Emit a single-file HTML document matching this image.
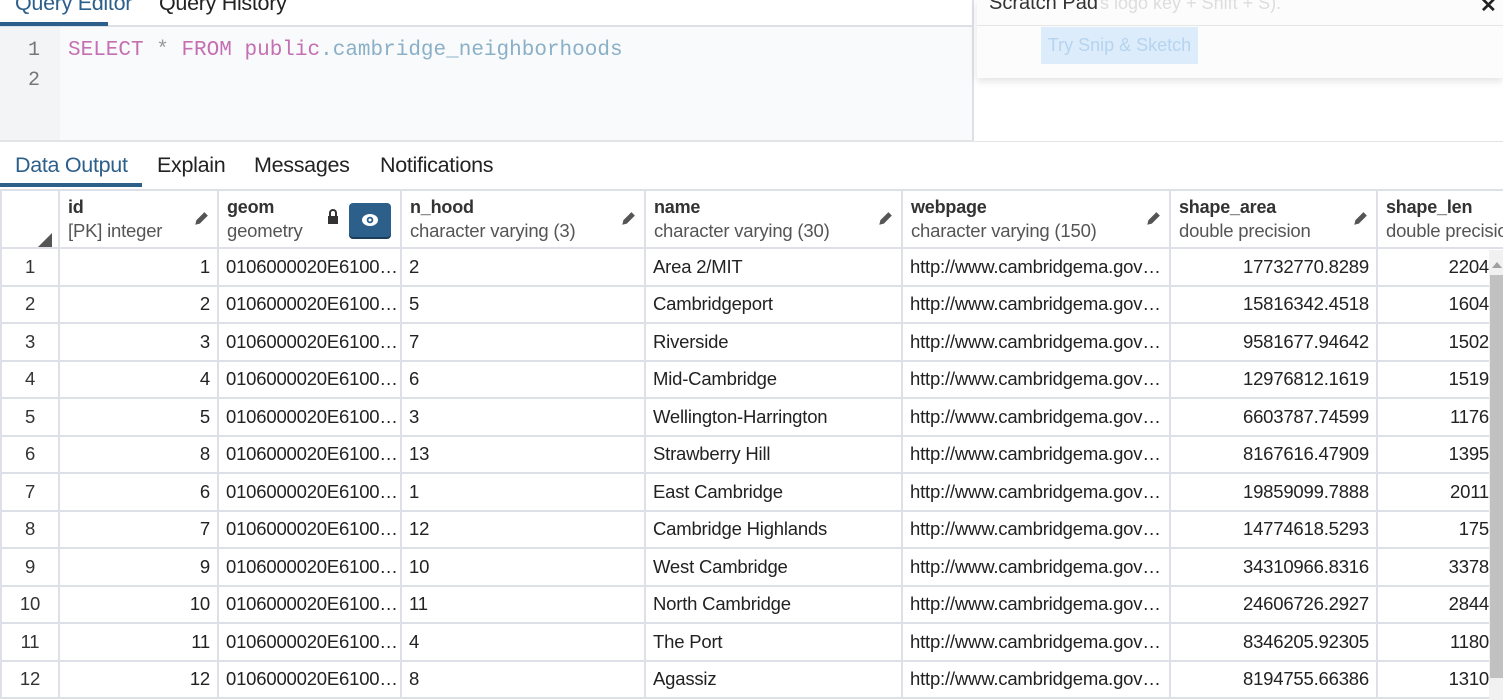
<!DOCTYPE html><html><head><style>
body{margin:0;width:1503px;height:700px;overflow:hidden;background:#fff;font-family:"Liberation Sans",sans-serif;color:#222;position:relative}
.a{position:absolute}
.tab{font-size:21.5px;color:#222;letter-spacing:-0.3px}
table{border-collapse:collapse;table-layout:fixed;position:absolute;left:0;top:189px;width:1510px;font-size:18.5px;letter-spacing:-0.2px}
td,th{border:2px solid #dde0e6;overflow:hidden;white-space:nowrap;padding:0 7px;height:35.5px}
th{height:56px;text-align:left;font-weight:normal;vertical-align:middle;position:relative;padding-left:8px}
th b{font-weight:bold;color:#333;font-size:18px;display:block;line-height:24px}
th span{color:#555;display:block;line-height:24px}
td.r{text-align:right}
td.c{text-align:center;color:#333}
.pen{position:absolute;right:8px;top:20px;width:16px;height:16px}
</style></head><body>
<div class="a" style="left:0;top:25px;width:973px;height:2px;background:#dde0e6"></div>
<div class="a" style="left:0;top:22px;width:108px;height:4px;background:#2c5f8a"></div>
<div class="a tab" style="left:15px;top:-9px;color:#2c5f8a">Query Editor</div>
<div class="a tab" style="left:159px;top:-9px">Query History</div>
<div class="a" style="left:0;top:27px;width:60px;height:113px;background:#f3f4f6"></div>
<div class="a" style="left:60px;top:27px;width:912px;height:113px;background:#f9fafb"></div>
<div class="a" style="left:972px;top:0;width:2px;height:141px;background:#dde0e6"></div>
<div class="a" style="left:0;top:140px;width:1503px;height:2px;background:#e2e4e8"></div>
<div class="a" style="left:28px;top:39px;font-family:'Liberation Mono',monospace;font-size:20px;color:#777">1</div>
<div class="a" style="left:28px;top:69px;font-family:'Liberation Mono',monospace;font-size:20px;color:#777">2</div>
<div class="a" style="left:68px;top:39px;font-family:'Liberation Mono',monospace;font-size:21px;color:#8ab0c8;white-space:pre"><span style="color:#c56fb3">SELECT</span> <span style="color:#999">*</span> <span style="color:#c56fb3">FROM</span> <span style="color:#c56fb3">public</span>.cambridge_neighborhoods</div>
<div class="a" style="left:974px;top:0;width:529px;height:141px;background:#fff"></div>
<div class="a" style="left:977px;top:0;width:526px;height:78px;background:#fcfcfc;box-shadow:0 3px 8px rgba(0,0,0,0.12)"></div>
<div class="a" style="left:977px;top:25px;width:526px;height:1px;background:#e5e5e5"></div>
<div class="a" style="left:989px;top:-8px;font-size:20px;color:#333">Scratch Pad</div>
<div class="a" style="left:1100px;top:-7px;font-size:18px;color:#ddd">s logo key + Shift + S).</div>
<div class="a" style="left:1480px;top:-7px;font-size:20px;font-weight:bold;color:#222">✕</div>
<div class="a" style="left:1041px;top:27px;width:157px;height:37px;background:#dcecfb;color:#b6d4f0;font-size:18px;line-height:37px;text-align:center">Try Snip &amp; Sketch</div>
<div class="a tab" style="left:15px;top:153px;color:#2c5f8a">Data Output</div>
<div class="a tab" style="left:157px;top:153px">Explain</div>
<div class="a tab" style="left:254px;top:153px">Messages</div>
<div class="a tab" style="left:380px;top:153px">Notifications</div>
<div class="a" style="left:0;top:183px;width:142px;height:4px;background:#2c5f8a"></div>
<table>
<colgroup><col style="width:58px"><col style="width:159px"><col style="width:183px"><col style="width:244px"><col style="width:257px"><col style="width:268px"><col style="width:207px"><col style="width:134px"></colgroup>
<tr><th style="position:relative"><div style="position:absolute;left:36px;top:42px;width:0;height:0;border-left:14px solid transparent;border-bottom:14px solid #555"></div></th>
<th><b>id</b><span>[PK] integer</span><svg class="pen" viewBox="0 0 14 14"><path d="M2 12l1-4 7-7 3 3-7 7z" fill="#555"/></svg></th>
<th><b>geom</b><span>geometry</span><svg style="position:absolute;left:108px;top:18px" width="12" height="16" viewBox="0 0 12 16"><path d="M3 7V4a3 3 0 0 1 6 0v3" stroke="#333" stroke-width="2" fill="none"/><rect x="1" y="7" width="10" height="8" fill="#333"/></svg><div style="position:absolute;left:130px;top:12px;width:42px;height:34px;background:#2c5f8a;border-radius:4px;box-shadow:0 2px 0 #1b3d5a"><svg style="position:absolute;left:12px;top:10px" width="18" height="14" viewBox="0 0 18 14"><ellipse cx="9" cy="7" rx="8" ry="6" fill="#fff"/><circle cx="9" cy="7" r="3.3" fill="#2c5f8a"/><circle cx="9" cy="7" r="1.5" fill="#fff"/></svg></div></th>
<th><b>n_hood</b><span>character varying (3)</span><svg class="pen" viewBox="0 0 14 14"><path d="M2 12l1-4 7-7 3 3-7 7z" fill="#555"/></svg></th>
<th><b>name</b><span>character varying (30)</span><svg class="pen" viewBox="0 0 14 14"><path d="M2 12l1-4 7-7 3 3-7 7z" fill="#555"/></svg></th>
<th><b>webpage</b><span>character varying (150)</span><svg class="pen" viewBox="0 0 14 14"><path d="M2 12l1-4 7-7 3 3-7 7z" fill="#555"/></svg></th>
<th><b>shape_area</b><span>double precision</span><svg class="pen" viewBox="0 0 14 14"><path d="M2 12l1-4 7-7 3 3-7 7z" fill="#555"/></svg></th>
<th><b>shape_len</b><span>double precision</span></th></tr>
<tr><td class="c">1</td><td class="r">1</td><td>0106000020E6100…</td><td>2</td><td>Area 2/MIT</td><td>http://www.cambridgema.gov…</td><td class="r">17732770.8289</td><td class="r" style="padding-right:21px">2204</td></tr>
<tr><td class="c">2</td><td class="r">2</td><td>0106000020E6100…</td><td>5</td><td>Cambridgeport</td><td>http://www.cambridgema.gov…</td><td class="r">15816342.4518</td><td class="r" style="padding-right:21px">1604</td></tr>
<tr><td class="c">3</td><td class="r">3</td><td>0106000020E6100…</td><td>7</td><td>Riverside</td><td>http://www.cambridgema.gov…</td><td class="r">9581677.94642</td><td class="r" style="padding-right:21px">1502</td></tr>
<tr><td class="c">4</td><td class="r">4</td><td>0106000020E6100…</td><td>6</td><td>Mid-Cambridge</td><td>http://www.cambridgema.gov…</td><td class="r">12976812.1619</td><td class="r" style="padding-right:21px">1519</td></tr>
<tr><td class="c">5</td><td class="r">5</td><td>0106000020E6100…</td><td>3</td><td>Wellington-Harrington</td><td>http://www.cambridgema.gov…</td><td class="r">6603787.74599</td><td class="r" style="padding-right:21px">1176</td></tr>
<tr><td class="c">6</td><td class="r">8</td><td>0106000020E6100…</td><td>13</td><td>Strawberry Hill</td><td>http://www.cambridgema.gov…</td><td class="r">8167616.47909</td><td class="r" style="padding-right:21px">1395</td></tr>
<tr><td class="c">7</td><td class="r">6</td><td>0106000020E6100…</td><td>1</td><td>East Cambridge</td><td>http://www.cambridgema.gov…</td><td class="r">19859099.7888</td><td class="r" style="padding-right:21px">2011</td></tr>
<tr><td class="c">8</td><td class="r">7</td><td>0106000020E6100…</td><td>12</td><td>Cambridge Highlands</td><td>http://www.cambridgema.gov…</td><td class="r">14774618.5293</td><td class="r" style="padding-right:21px">175</td></tr>
<tr><td class="c">9</td><td class="r">9</td><td>0106000020E6100…</td><td>10</td><td>West Cambridge</td><td>http://www.cambridgema.gov…</td><td class="r">34310966.8316</td><td class="r" style="padding-right:21px">3378</td></tr>
<tr><td class="c">10</td><td class="r">10</td><td>0106000020E6100…</td><td>11</td><td>North Cambridge</td><td>http://www.cambridgema.gov…</td><td class="r">24606726.2927</td><td class="r" style="padding-right:21px">2844</td></tr>
<tr><td class="c">11</td><td class="r">11</td><td>0106000020E6100…</td><td>4</td><td>The Port</td><td>http://www.cambridgema.gov…</td><td class="r">8346205.92305</td><td class="r" style="padding-right:21px">1180</td></tr>
<tr><td class="c">12</td><td class="r">12</td><td>0106000020E6100…</td><td>8</td><td>Agassiz</td><td>http://www.cambridgema.gov…</td><td class="r">8194755.66386</td><td class="r" style="padding-right:21px">1310</td></tr>
</table>
<div class="a" style="left:1489px;top:250px;width:14px;height:450px;background:#f1f1f1"></div>
<div class="a" style="left:1490px;top:275px;width:13px;height:403px;background:#c1c1c1"></div>
<div class="a" style="left:1492px;top:262px;width:0;height:0;border-left:5px solid transparent;border-right:5px solid transparent;border-bottom:6px solid #a0a0a0"></div>
</body></html>
